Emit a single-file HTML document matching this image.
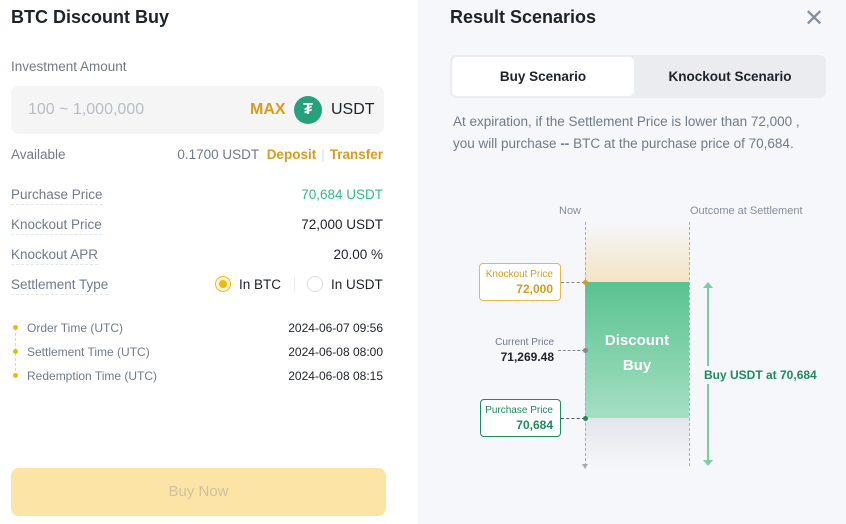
<!DOCTYPE html>
<html><head><meta charset="utf-8"><style>
*{margin:0;padding:0;box-sizing:border-box}
body{width:846px;height:524px;overflow:hidden;font-family:"Liberation Sans",sans-serif;background:#fff;position:relative;color:#1e2329}
.abs{position:absolute}
.l{left:0;top:0;width:418px;height:524px;background:#fff}
.r{left:418px;top:0;width:428px;height:524px;background:#f5f7fa}
.lab{font-size:13.5px;color:#707a8a}
.dl{border-bottom:1px dashed #e2e5e9;padding-bottom:2px}
.val{font-size:13.5px;right:35px;text-align:right}
.dot{width:5px;height:5px;border-radius:50%;background:#f0b90b}
</style></head><body>
<div class="abs l">
 <div class="abs" style="left:11px;top:7px;font-size:18px;font-weight:bold">BTC Discount Buy</div>
 <div class="abs lab" style="left:11px;top:59px">Investment Amount</div>
 <div class="abs" style="left:11px;top:86px;width:373px;height:48px;background:#f5f5f5;border-radius:8px"></div>
 <div class="abs" style="left:28px;top:101px;font-size:16px;color:#b7bdc6">100 ~ 1,000,000</div>
 <div class="abs" style="left:250px;top:101px;font-size:16px;font-weight:bold;color:#d89c1a">MAX</div>
 <div class="abs" style="left:294px;top:96px;width:28px;height:28px;border-radius:50%;background:#26a17b;color:#fff;font-weight:bold;text-align:center;line-height:28px;font-size:16px">₮</div>
 <div class="abs" style="left:331px;top:101px;font-size:16px">USDT</div>
 <div class="abs lab" style="left:11px;top:147px">Available</div>
 <div class="abs" style="right:35px;top:147px;font-size:13.5px;color:#707a8a">0.1700 USDT <b style="color:#d89c1a;margin-left:4px">Deposit</b><span style="color:#ddd;margin:0 5px">|</span><b style="color:#d89c1a">Transfer</b></div>
 <div class="abs lab dl" style="left:11px;top:187px">Purchase Price</div><div class="abs val" style="top:187px;color:#2ebd85">70,684 USDT</div>
 <div class="abs lab dl" style="left:11px;top:217px">Knockout Price</div><div class="abs val" style="top:217px">72,000 USDT</div>
 <div class="abs lab dl" style="left:11px;top:247px">Knockout APR</div><div class="abs val" style="top:247px">20.00 %</div>
 <div class="abs lab dl" style="left:11px;top:277px">Settlement Type</div>
 <div class="abs" style="left:215px;top:276px;width:16px;height:16px;border-radius:50%;border:1px solid #f0b90b;background:#fff6d8"><div style="margin:3px;width:8px;height:8px;border-radius:50%;background:#f0b90b"></div></div>
 <div class="abs" style="left:239px;top:277px;font-size:13.5px">In BTC</div>
 <div class="abs" style="left:294px;top:276px;width:1px;height:17px;background:#eee"></div>
 <div class="abs" style="left:307px;top:276px;width:16px;height:16px;border-radius:50%;border:1px solid #ddd"></div>
 <div class="abs" style="left:331px;top:277px;font-size:13.5px">In USDT</div>
 <div class="abs" style="left:15px;top:328px;height:48px;border-left:1px dashed #f0d590"></div>
 <div class="abs dot" style="left:13px;top:325px"></div><div class="abs dot" style="left:13px;top:349px"></div><div class="abs dot" style="left:13px;top:373px"></div>
 <div class="abs lab" style="left:27px;top:321px;font-size:12px">Order Time (UTC)</div><div class="abs val" style="top:321px;font-size:12px">2024-06-07 09:56</div>
 <div class="abs lab" style="left:27px;top:345px;font-size:12px">Settlement Time (UTC)</div><div class="abs val" style="top:345px;font-size:12px">2024-06-08 08:00</div>
 <div class="abs lab" style="left:27px;top:369px;font-size:12px">Redemption Time (UTC)</div><div class="abs val" style="top:369px;font-size:12px">2024-06-08 08:15</div>
 <div class="abs" style="left:11px;top:468px;width:375px;height:48px;background:#fce3a6;border-radius:8px;color:#d2c29a;font-size:15px;text-align:center;line-height:48px">Buy Now</div>
</div>
<div class="abs r">
 <div class="abs" style="left:32px;top:7px;font-size:18px;font-weight:bold">Result Scenarios</div>
 <div class="abs" style="left:386px;top:4px;font-size:24px;color:#848e9c">✕</div>
 <div class="abs" style="left:32px;top:55px;width:376px;height:43px;background:#eaecef;border-radius:6px"></div>
 <div class="abs" style="left:34px;top:57px;width:182px;height:39px;background:#fff;border-radius:5px;text-align:center;line-height:39px;font-size:13.5px;font-weight:bold">Buy Scenario</div>
 <div class="abs" style="left:218px;top:57px;width:188px;height:39px;text-align:center;line-height:39px;font-size:13.5px;font-weight:bold">Knockout Scenario</div>
 <div class="abs" style="left:35px;top:111px;width:372px;font-size:13.5px;color:#707a8a;line-height:22px">At expiration, if the Settlement Price is lower than 72,000 ,<br>you will purchase <b>--</b> BTC at the purchase price of 70,684.</div>
 <div class="abs" style="left:141px;top:205px;font-size:11px;color:#848e9c">Now</div>
 <div class="abs" style="left:272px;top:205px;font-size:11px;color:#848e9c">Outcome at Settlement</div>
 <div class="abs" style="left:167px;top:222px;width:104px;height:60px;background:linear-gradient(#f5f7fa,#f3e4c3)"></div>
 <div class="abs" style="left:167px;top:282px;width:104px;height:136px;background:linear-gradient(#59c290,#a5dfc2)"></div>
 <div class="abs" style="left:167px;top:418px;width:104px;height:50px;background:linear-gradient(#e2e5ea,#f5f7fa)"></div>
 <div class="abs" style="left:167px;top:222px;height:244px;border-left:1px dashed #aaa"></div>
 <div class="abs" style="left:271px;top:222px;height:244px;border-left:1px dashed #aaa"></div>
 <div class="abs" style="left:164px;top:464px;border:3px solid transparent;border-top:5px solid #aaa;border-bottom:0"></div>
 <div class="abs" style="left:167px;top:328px;width:104px;text-align:center;color:#fff;font-weight:bold;font-size:15px;line-height:25px">Discount<br>Buy</div>
 <div class="abs" style="left:61px;top:263px;width:82px;height:38px;border:1px solid #e8b650;border-radius:4px;background:#fff;text-align:right;padding:4px 7px 0 0;color:#d89c1a;font-size:10px;line-height:14px">Knockout Price<br><b style="font-size:12px">72,000</b></div>
 <div class="abs" style="left:143px;top:282px;width:24px;border-top:1px dashed #888"></div>
 <div class="abs" style="left:165px;top:280px;width:5px;height:5px;border-radius:50%;background:#d89c1a"></div>
 <div class="abs" style="left:60px;top:336px;width:76px;text-align:right;font-size:10px;color:#707a8a;line-height:14px">Current Price<br><b style="font-size:12px;color:#1e2329">71,269.48</b></div>
 <div class="abs" style="left:140px;top:350px;width:27px;border-top:1px dashed #888"></div>
 <div class="abs" style="left:165px;top:348px;width:5px;height:5px;border-radius:50%;background:#888"></div>
 <div class="abs" style="left:62px;top:399px;width:81px;height:38px;border:1px solid #1f8a5a;border-radius:4px;background:#fff;text-align:right;padding:4px 7px 0 0;color:#1f8a5a;font-size:10px;line-height:14px">Purchase Price<br><b style="font-size:12px">70,684</b></div>
 <div class="abs" style="left:143px;top:418px;width:24px;border-top:1px dashed #555"></div>
 <div class="abs" style="left:165px;top:416px;width:5px;height:5px;border-radius:50%;background:#1f8a5a"></div>
 <div class="abs" style="left:289px;top:286px;width:1.5px;height:178px;background:#7ccca6"></div>
 <div class="abs" style="left:285px;top:282px;width:0;height:0;border:5px solid transparent;border-bottom:6px solid #7ccca6;border-top:0"></div>
 <div class="abs" style="left:285px;top:460px;width:0;height:0;border:5px solid transparent;border-top:6px solid #7ccca6;border-bottom:0"></div>
 <div class="abs" style="left:286px;top:366px;background:#f5f7fa;padding:2px 0;font-size:12px;font-weight:bold;color:#1f8a5a">Buy USDT at 70,684</div>
</div>
</body></html>
